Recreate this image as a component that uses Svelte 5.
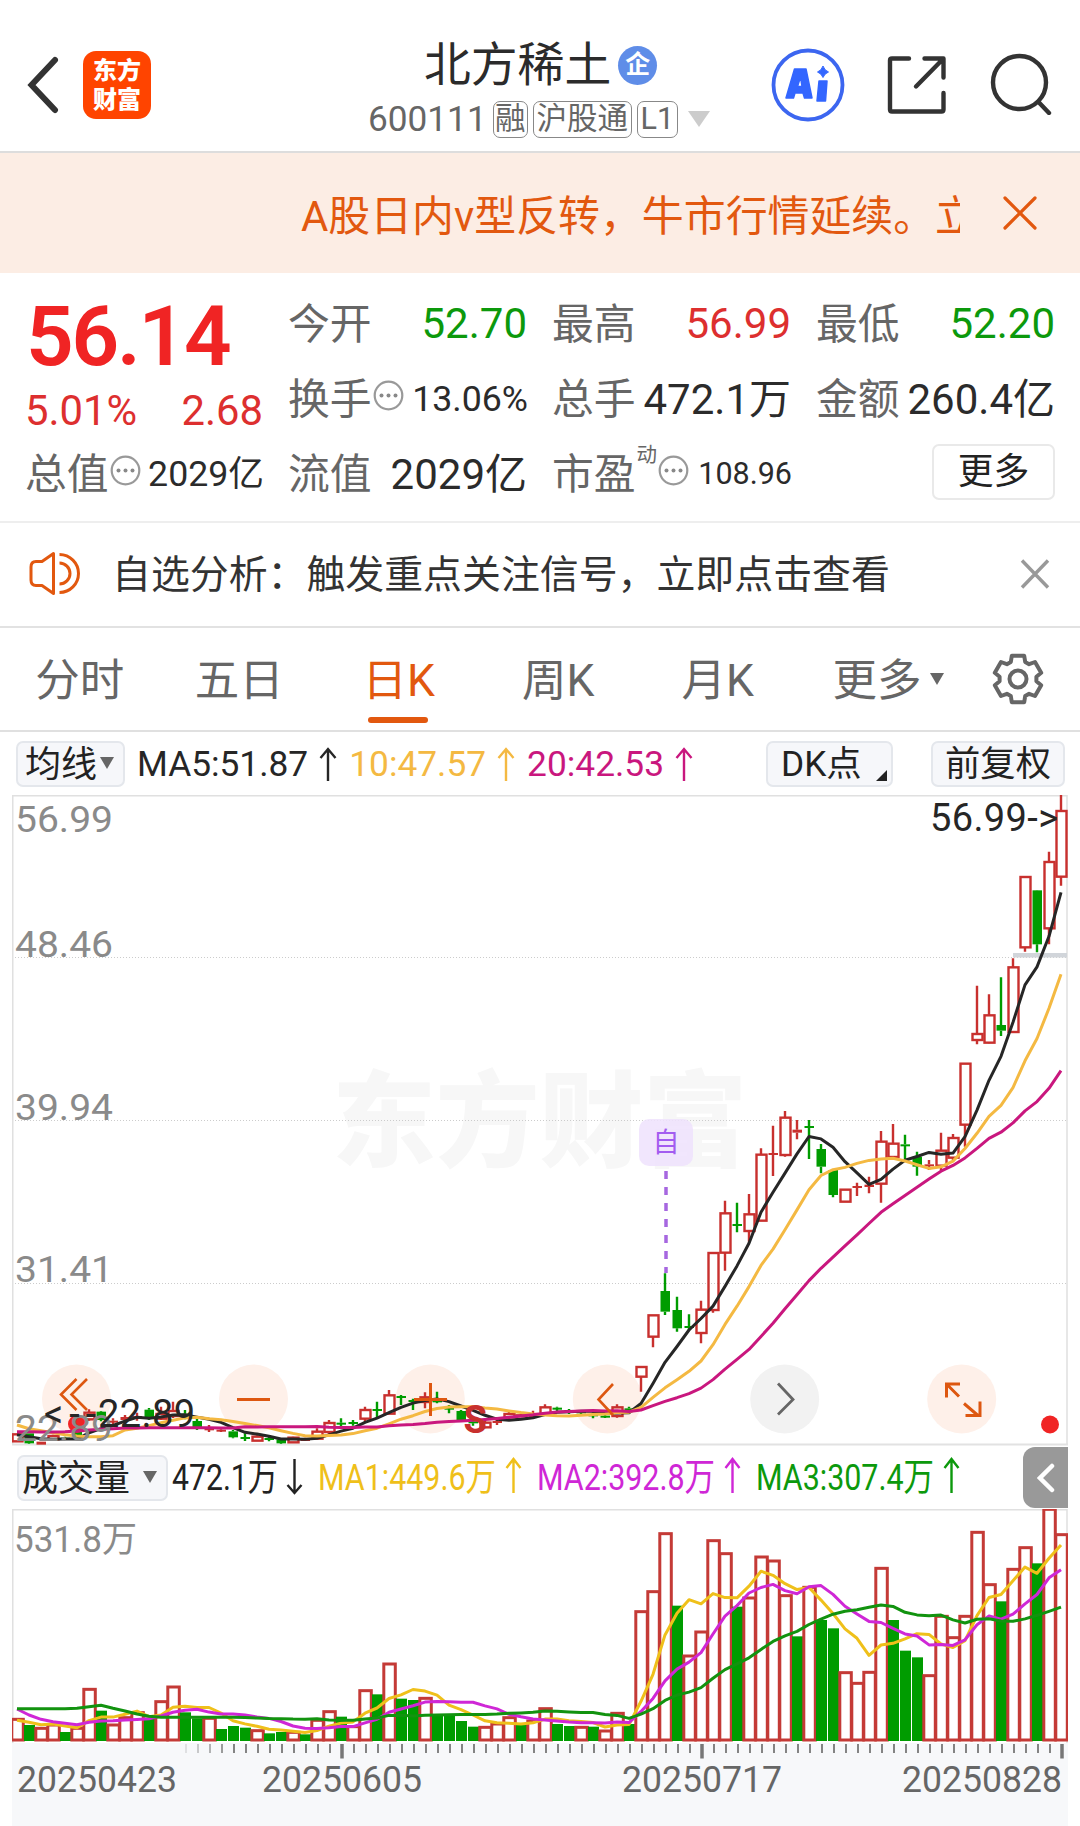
<script lang="ts">
  type Candle = { x: number; high: number; top: number; bottom: number; low: number; up: boolean };

  const STEP = 12;
  const LEFT = 5;

  // rows: high, body top, body bottom, low, direction (1 up / 0 down), in thirds of a pixel
  const early = [
    [283, 283, 304, 304, 1], [280, 280, 310, 312, 0], [305, 305, 314, 314, 1], [284, 288, 298, 300, 1],
    [290, 293, 298, 300, 0], [250, 255, 285, 293, 0], [208, 218, 238, 242, 1], [213, 215, 240, 244, 0],
    [235, 242, 246, 256, 1], [225, 231, 240, 244, 1], [218, 228, 236, 242, 1], [204, 209, 232, 240, 0],
    [200, 222, 236, 240, 1], [185, 213, 228, 234, 1], [210, 221, 225, 238, 0], [235, 243, 264, 270, 0],
    [255, 265, 269, 276, 1], [265, 269, 273, 276, 1], [270, 274, 292, 295, 0], [280, 291, 295, 303, 0],
    [286, 290, 302, 303, 1], [290, 294, 298, 304, 0], [295, 298, 310, 312, 0], [290, 293, 307, 309, 1],
    [293, 297, 300, 303, 1], [265, 275, 296, 297, 1], [240, 249, 276, 283, 1], [235, 248, 252, 262, 0],
    [240, 246, 250, 257, 0], [200, 210, 236, 245, 1], [185, 207, 211, 233, 0], [150, 166, 221, 223, 1],
    [165, 168, 174, 195, 0], [176, 180, 186, 210, 0], [157, 172, 186, 205, 1], [155, 181, 185, 190, 0],
    [195, 203, 207, 220, 0], [210, 213, 240, 242, 0], [235, 244, 250, 257, 0], [240, 248, 262, 265, 1],
    [232, 243, 247, 255, 1], [215, 222, 232, 240, 1], [222, 226, 236, 238, 1], [212, 226, 233, 236, 1],
    [193, 202, 222, 228, 1], [200, 203, 207, 215, 0], [207, 210, 215, 222, 0], [212, 214, 219, 222, 0],
    [215, 223, 227, 235, 0], [218, 227, 231, 234, 0], [193, 202, 228, 233, 1], [200, 205, 211, 218, 0],
    [80, 81, 110, 155, 1]
  ];
  const middle = [
    [765, 766, 830, 862, 1], [640, 693, 755, 765, 0], [710, 750, 805, 815, 0], [763, 798, 803, 812, 0],
    [722, 749, 819, 850, 1], [578, 579, 750, 758, 1], [422, 460, 578, 632, 1], [428, 492, 497, 517, 0],
    [402, 463, 513, 545, 1], [265, 284, 482, 483, 1], [197, 279, 283, 348, 1], [153, 173, 285, 290, 1],
    [180, 209, 218, 238, 1], [180, 198, 202, 297, 0], [252, 267, 320, 340, 0], [328, 330, 405, 412, 0],
    [388, 389, 425, 425, 1], [368, 378, 382, 408, 1]
  ];
  const late = [
    [1190, 1214, 1221, 1240, 1], [1053, 1085, 1211, 1268, 1], [1032, 1091, 1131, 1140, 1],
    [1064, 1093, 1097, 1140, 0], [1115, 1130, 1160, 1187, 0], [1140, 1153, 1158, 1170, 1],
    [1058, 1112, 1157, 1172, 1], [1062, 1074, 1133, 1140, 1], [850, 851, 1034, 1100, 1],
    [617, 762, 780, 793, 1], [643, 706, 788, 790, 1], [592, 735, 752, 768, 0], [535, 562, 756, 758, 1],
    [290, 291, 502, 515, 1], [330, 331, 493, 517, 0], [215, 246, 445, 493, 1], [45, 93, 290, 317, 1]
  ];

  function place(rows: number[][], first: number, base: number): Candle[] {
    return rows.map(([high, top, bottom, low, up], i) => ({
      x: LEFT + (first + i) * STEP,
      high: base + high / 3,
      top: base + top / 3,
      bottom: base + bottom / 3,
      low: base + low / 3,
      up: up === 1
    }));
  }

  const candles = [...place(early, 0, 545), ...place(middle, 53, 265), ...place(late, 71, -15)];

  // bar tops in thirds of a pixel; negative means a falling day
  const tops = [
    1138, -1155, 1165, 1155, -1176, 1165, 1048, -1112, 1155, 1133, 1118, -1133, 1085, 1041, -1117, -1135,
    1135, -1167, -1158, -1163, 1172, -1180, -1176, 1177, -1183, 1141, 1115, -1130, 1160, 1052, -1063, 972,
    -1076, -1080, 1075, -1123, -1124, -1143, -1160, 1162, 1152, 1133, -1152, 1143, 1106, -1152, -1158, 1162,
    -1160, 1173, 1120, -1152, 815, 755, 581, -797, 948, 876, 602, 641, -800, 774, 651, 663, 767, -889, 742,
    -840, -865, 998, 1030, 997, 685, -840, -932, -952, 1007, 829, 893, 829, 577, 734, -784, 688, 623, -670,
    508, 584
  ];
  const bars = tops.map((t, i) => ({ x: LEFT + i * STEP, y: Math.abs(t) / 3 - 169, up: t > 0 }));

  function average(values: number[], n: number, lead: number[]) {
    return values
      .map((_, i) => {
        const y = i < n - 1 ? lead[i] : values.slice(i - n + 1, i + 1).reduce((a, b) => a + b, 0) / n;
        return `${LEFT + i * STEP},${y.toFixed(1)}`;
      })
      .join(" ");
  }

  const closes = candles.map((c) => (c.up ? c.top : c.bottom));
  const third = (base: number, list: number[]) => list.map((v) => base + v / 3);
  const priceLines = [
    { color: "#262626", points: average(closes, 5, third(545, [284, 290, 296, 298])) },
    { color: "#f4b942", points: average(closes, 10, third(545, [255, 266, 272, 278, 284, 288, 290, 290, 287])) },
    {
      color: "#c9177e",
      points: average(closes, 20, third(545, [275, 275, 276, 276, 275, 273, 270, 268, 266, 264, 264, 263, 263, 263, 263, 263, 263, 264, 264]))
    }
  ];
  const volumes = bars.map((b) => b.y);
  const volumeLines = [
    { color: "#efc01a", points: average(volumes, 5, third(-169, [1141, 1147, 1154, 1152])) },
    { color: "#cf27d6", points: average(volumes, 10, third(-169, [1107, 1125, 1138, 1145, 1150, 1154, 1147, 1143, 1142])) },
    {
      color: "#12930f",
      points: average(volumes, 20, third(-169, [1106, 1106, 1106, 1106, 1106, 1105, 1100, 1096, 1105, 1113, 1122, 1129, 1132, 1132, 1132, 1132, 1132, 1132, 1132]))
    }
  ];

  const gridLines = [162.5, 325.5, 488.5];
  const priceLabels = [
    { text: "56.99", y: 37 }, { text: "48.46", y: 162 }, { text: "39.94", y: 325 },
    { text: "31.41", y: 487 }, { text: "22.89", y: 646 }
  ];
  const volumeLegend = [
    { text: "472.1万", x: 160, width: 106, color: "#222", arrow: 282.5, down: true },
    { text: "MA1:449.6万", x: 306, width: 178, color: "#efc01a", arrow: 501.5 },
    { text: "MA2:392.8万", x: 525, width: 178, color: "#cf27d6", arrow: 720.5 },
    { text: "MA3:307.4万", x: 744, width: 178, color: "#0c990c", arrow: 939.5 }
  ];
  const averages = [
    { text: "MA5:51.87", color: "#262626" },
    { text: "10:47.57", color: "#f4b942" },
    { text: "20:42.53", color: "#c9177e" }
  ];
  const ticks = Array.from({ length: 74 }, (_, i) => ({
    x: 174 + i * STEP,
    major: [13, 43, 73].includes(i),
    opacity: Math.min(1, 0.2 + i * 0.2)
  }));
  const dates = [
    { text: "20250423", x: 5 }, { text: "20250605", x: 250 },
    { text: "20250717", x: 610 }, { text: "20250828", x: 890 }
  ];
  const tabs = ["分时", "五日", "日K", "周K", "月K"];

  const gear = [0, 1, 2, 3, 4, 5]
    .flatMap((k) => [[-23, 18.5], [-15, 24], [15, 24], [23, 18.5]].map(([d, r]) => {
      const a = ((k * 60 - 90 + d) * Math.PI) / 180;
      return `${(27 + r * Math.cos(a)).toFixed(1)},${(27 + r * Math.sin(a)).toFixed(1)}`;
    }))
    .join(" ");
</script>

{#snippet more()}
  <svg class="dots" width="31" height="31" viewBox="0 0 31 31">
    <circle cx="15.5" cy="15.5" r="13.8" fill="none" stroke="#999" stroke-width="2.200" />
    <g fill="#888"><circle cx="8.5" cy="15.5" r="2" /><circle cx="15.5" cy="15.5" r="2" /><circle cx="22.5" cy="15.5" r="2" /></g>
  </svg>
{/snippet}

<div class="app">
  <header>
    <svg class="back" width="32" height="60" viewBox="0 0 32 60"><path d="M28 5 4.5 30 28 55" fill="none" stroke="#333" stroke-width="6" stroke-linecap="round" /></svg>
    <div class="logo"><span>东方</span><span>财富</span></div>
    <div class="stock">
      <div class="name">北方稀土<span class="badge">企</span></div>
      <div class="code">
        <span class="num">600111</span><span class="tag">融</span><span class="tag wide">沪股通</span><span class="tag">L1</span>
        <svg width="22" height="16" viewBox="0 0 22 16"><path d="M0 0H22L11 16Z" fill="#ccc" /></svg>
      </div>
    </div>
    <svg class="ai" width="74" height="74" viewBox="0 0 74 74">
      <circle cx="37" cy="37" r="34.5" fill="none" stroke="#3c66f0" stroke-width="3.8" />
      <path d="M15 50 23.5 21H35L41 50H33.500L32 45H24L22.500 50ZM26.5 38.500H31L29.500 29Z" fill="#3366ff" stroke="#3366ff" stroke-width="1.500" stroke-linejoin="round" fill-rule="evenodd" />
      <path d="M48 33H56L54.500 53H46Z" fill="#3366ff" stroke="#3366ff" stroke-width="1.500" stroke-linejoin="round" />
      <path d="M52 18Q53.500 22.500 57.500 24Q53.500 25.500 52 29.500Q50.500 25.500 46.500 24Q50.500 22.500 52 18Z" fill="#3366ff" stroke="#3366ff" />
    </svg>
    <svg class="share" width="60" height="60" viewBox="0 0 60 60" fill="none" stroke="#333" stroke-width="4.400" stroke-linecap="round" stroke-linejoin="round">
      <path d="M22 3.500H5Q3 3.500 3 5.500V54.500Q3 56.500 5 56.500H54.500Q56.500 56.500 56.500 54.500V38M37.500 3.500H56.500V22.500M56 4 29 31.500" />
    </svg>
    <svg class="search" width="62" height="62" viewBox="0 0 62 62" fill="none" stroke="#333" stroke-width="4.400" stroke-linecap="round"><circle cx="29.500" cy="29.500" r="26.500" /><path d="M48.500 49 59 60" /></svg>
  </header>

  <div class="banner">
    <p>A股日内v型反转，牛市行情延续。立</p>
    <svg width="34" height="34" viewBox="0 0 34 34"><path d="M2 2 32 32M32 2 2 32" stroke="#e2580f" stroke-width="3.200" stroke-linecap="round" /></svg>
  </div>

  <section class="quote">
    <div class="price">
      <strong>56.14</strong>
      <div class="cell red"><span>5.01%</span><span>2.68</span></div>
    </div>
    <div class="cell"><label>今开</label><b class="green">52.70</b></div>
    <div class="cell"><label>最高</label><b class="red">56.99</b></div>
    <div class="cell"><label>最低</label><b class="green">52.20</b></div>
    <div class="cell"><label>换手{@render more()}</label><b class="mid">13.06%</b></div>
    <div class="cell"><label>总手</label><b class="cjk">472.1万</b></div>
    <div class="cell"><label>金额</label><b class="cjk">260.4亿</b></div>
    <div class="cell"><label>总值{@render more()}</label><b class="mid cjk">2029亿</b></div>
    <div class="cell"><label>流值</label><b class="cjk">2029亿</b></div>
    <div class="cell"><label>市盈<sup>动</sup>{@render more()}</label><b class="small">108.96</b></div>
    <div class="cell"><button class="expand">更多</button></div>
  </section>

  <div class="notice">
    <svg width="52" height="46" viewBox="0 0 52 46" fill="none" stroke="#e2580f" stroke-width="3">
      <path d="M24.500 2.500V42.500L13 34.500H7Q2 34.500 2 29V16Q2 10.500 7 10.500H13Z" stroke-linejoin="round" />
      <path d="M30.500 12A10.500 10.500 0 0 1 30.500 33M30.500 3.500A19 19 0 0 1 30.500 41.500" />
    </svg>
    <p>自选分析：触发重点关注信号，立即点击查看</p>
    <svg width="30" height="30" viewBox="0 0 30 30"><path d="M2 1.500 28 28.500M28 1.500 2 28.500" stroke="#999" stroke-width="3.400" /></svg>
  </div>

  <nav>
    {#each tabs as tab}
      <span class:active={tab === "日K"}>{tab}</span>
    {/each}
    <span class="menu">更多<svg width="14" height="12" viewBox="0 0 14 12"><path d="M0 0H14L7 12Z" fill="#666" /></svg></span>
    <svg class="gear" width="54" height="54" viewBox="0 0 54 54" fill="none" stroke="#666" stroke-width="4" stroke-linejoin="round"><polygon points={gear} /><circle cx="27" cy="27" r="8.500" /></svg>
  </nav>

  <div class="averages">
    <button class="line">均线<svg width="14" height="12" viewBox="0 0 14 12"><path d="M0 0H14L7 12Z" fill="#666" /></svg></button>
    {#each averages as item}
      <span class="avg" style:color={item.color}>{item.text}<svg width="18" height="34" viewBox="0 0 18 34" fill="none" stroke="currentColor" stroke-width="2.400"><path d="M9 34V2M1.500 11 9 2 16.500 11" /></svg></span>
    {/each}
    <button class="dk">DK点<svg width="11" height="11" viewBox="0 0 11 11"><path d="M11 0V11H0Z" fill="#222" /></svg></button>
    <button class="adjust">前复权</button>
  </div>

  <svg class="chart" width="1056" height="651" viewBox="0 0 1056 651">
    <text class="watermark" x="320" y="364" textLength="415" lengthAdjust="spacingAndGlyphs">东方财富</text>
    {#each gridLines as y}
      <path d="M0 {y}H1055" stroke="#ccc" stroke-dasharray="1 2" />
    {/each}
    <path d="M.75 650V.75H1055V650" fill="none" stroke="#e0e0e0" stroke-width="1.500" />
    <path d="M0 649.500H1056" stroke="#e2e2e2" stroke-width="2" />
    <rect x="1001" y="158" width="54" height="4.500" fill="#d1d5da" />
    {#each [64.5, 241.5, 418.3, 595.3, 772.7, 949.7] as cx, i}
      <circle {cx} cy="604" r="34.500" fill={i === 4 ? "#f2f2f2" : "#fef0e9"} />
    {/each}
    {#each candles as c}
      {@const color = c.up ? "#c8302e" : "#009c00"}
      <path d="M{c.x} {c.high}V{c.top}M{c.x} {c.bottom}V{c.low}" stroke={color} stroke-width="2.400" />
      {#if c.up && c.bottom - c.top > 3}
        <rect x={c.x - 4.5} y={c.top} width="10" height={c.bottom - c.top} fill="none" stroke={color} stroke-width="2.400" />
      {:else}
        <rect x={c.x - 4.5} y={c.top} width="9.500" height={Math.max(2, c.bottom - c.top)} fill={color} />
      {/if}
    {/each}
    <circle cx="65" cy="629" r="9" fill="#f02424" />
    <circle cx="1038" cy="629.500" r="9" fill="#f02424" />
    {#each priceLines as line}
      <polyline points={line.points} fill="none" stroke={line.color} stroke-width="3" stroke-linejoin="round" />
    {/each}
    {#each priceLabels as label}
      <text class="label" x="3" y={label.y} textLength="98" lengthAdjust="spacingAndGlyphs">{label.text}</text>
    {/each}
    <text class="s" x="451.500" y="638">S</text>
    <g fill="none" stroke="#dd5710" stroke-width="2.600">
      <path d="M64.500 584 49 599.500 64.500 615M75 584 59.500 599.500 75 615" />
      <path d="M225 604.500H258M402 604.500H435M418.500 588V621" stroke-width="3" />
      <path d="M601 589 586.500 604.500 601 620" />
      <path d="M934.500 602V588.500H948M935 589 947 601M952 608 966 620M953.500 620H968V606" stroke-width="3" transform="translate(0 .5)" />
    </g>
    <path d="M766 588.500 781 604.500 766 619.500" fill="none" stroke="#666" stroke-width="2.800" />
    <path d="M654 376V478" stroke="#a667e0" stroke-width="3.500" stroke-dasharray="8 8" />
    <rect x="627" y="324" width="54" height="47" rx="10" fill="#efe2fd" fill-opacity=".85" />
    <text class="self" x="640.500" y="357">自</text>
    <text class="peak" x="918" y="36" textLength="128">56.99-&gt;</text>
    <text class="peak" x="32" y="632" textLength="52">&lt;--</text>
    <text class="peak" x="86" y="632" textLength="97">22.89</text>
  </svg>

  <div class="volume-head">
    <button class="line">成交量<svg width="14" height="12" viewBox="0 0 14 12"><path d="M0 0H14L7 12Z" fill="#666" /></svg></button>
    <svg class="legend" width="1056" height="62" viewBox="0 0 1056 62">
      {#each volumeLegend as item}
        <text x={item.x} y="44" fill={item.color} textLength={item.width} lengthAdjust="spacingAndGlyphs">{item.text}</text>
        <path d={item.down ? "M0 13V47M-7 39 0 47 7 39" : "M0 47V13M-7 22 0 13 7 22"} transform="translate({item.arrow} 0)" fill="none" stroke={item.color} stroke-width="2.400" />
      {/each}
    </svg>
    <div class="drawer"><svg width="18" height="30" viewBox="0 0 18 30"><path d="M15 3 3 15 15 27" fill="none" stroke="#fff" stroke-width="4.500" stroke-linecap="round" /></svg></div>
  </div>

  <svg class="chart" width="1056" height="234" viewBox="0 0 1056 234">
    <path d="M.75 234V.75H1055V234" fill="none" stroke="#e0e0e0" stroke-width="1.500" />
    <text class="label" x="2" y="42.500" textLength="123" lengthAdjust="spacingAndGlyphs">531.8万</text>
    {#each bars as bar}
      {#if bar.up}
        <rect x={bar.x - 5.2} y={bar.y} width="11.500" height={231 - bar.y} fill="#fff" stroke="#c43a36" stroke-width="3" />
      {:else}
        <rect x={bar.x - 5} y={bar.y} width="11" height={232 - bar.y} fill="#009c00" />
      {/if}
    {/each}
    {#each volumeLines as line}
      <polyline points={line.points} fill="none" stroke={line.color} stroke-width="3" stroke-linejoin="round" />
    {/each}
  </svg>

  <svg class="chart axis" width="1056" height="83" viewBox="0 0 1056 83">
    {#each ticks as tick}
      <path d="M{tick.x} 1V{tick.major ? 15.5 : 10}" stroke="#777" stroke-width={tick.major ? 3.5 : 1.8} opacity={tick.opacity} />
    {/each}
    {#each dates as date}
      <text x={date.x} y="48.500" textLength="160" lengthAdjust="spacingAndGlyphs">{date.text}</text>
    {/each}
  </svg>
</div>

<style>
  :global(body) { background: #fff; }
  .app { width: 1080px; height: 1826px; overflow: hidden; background: #fff; color: #2b2b2b; font-family: Roboto, "Noto Sans CJK SC", sans-serif; }
  .app svg { display: block; flex: none; }
  p { margin: 0; }
  button { box-sizing: border-box; display: flex; align-items: center; margin: 0; padding: 0 0 6px; border: 2px solid #e4e7ec; border-radius: 7px; background: #f6f7fa; color: #222; font: inherit; white-space: nowrap; }

  header { box-sizing: border-box; display: flex; align-items: flex-start; height: 153px; border-bottom: 2px solid #ddd; }
  .back { margin: 55px 0 0 27px; }
  .logo { display: flex; flex-direction: column; justify-content: center; align-items: center; box-sizing: border-box; width: 68px; height: 68px; margin: 51px 0 0 24px; padding-bottom: 4px; border-radius: 13px; background: #ff4400; color: #fff; font: 900 24px/29px "Noto Sans CJK SC", sans-serif; }
  .stock { width: 343px; margin: 35px 0 0 217px; white-space: nowrap; }
  .name { display: flex; align-items: center; height: 60px; padding-left: 56px; font-size: 46.800px; line-height: 60px; }
  .badge { width: 39px; height: 39px; margin-left: 7px; border-radius: 50%; background: #5f8de8; color: #fff; font-size: 25px; font-weight: 700; line-height: 38px; text-align: center; }
  .code { display: flex; align-items: center; height: 48px; color: #666; font-size: 30.5px; }
  .num { width: 124.500px; font-size: 35.2px; }
  .tag { box-sizing: border-box; flex: none; height: 37px; margin-right: 5px; padding: 0 1.500px; border: 1.5px solid #888; border-radius: 7px; line-height: 34px; }
  .tag.wide { padding: 0 2.500px; }
  .tag:nth-child(4) { padding: 0 3px; }
  .code svg { margin-left: 5px; }
  .ai { margin: 48px 0 0 60px; }
  .share { margin: 55px 0 0 42px; }
  .search { margin: 53px 0 0 43px; }

  .banner { display: flex; align-items: center; height: 120px; background: #fcede4; color: #e2580f; }
  .banner p { width: 659px; margin: -1px 0 0 301px; overflow: hidden; font-size: 41.9px; white-space: nowrap; }
  .banner svg { margin: -1px 0 0 43px; }

  .quote { box-sizing: border-box; display: grid; grid-template-columns: 238px 239px 239px 239px; grid-template-rows: repeat(3, 75px); column-gap: 25px; height: 250px; padding: 13px 0 0 25px; border-bottom: 2px solid #eee; }
  .price { grid-row: 1 / 3; }
  .price strong { display: block; height: 87px; margin-left: 1px; color: #f02424; font-size: 83.500px; font-weight: 600; line-height: 102px; letter-spacing: -2.200px; }
  .cell { position: relative; display: flex; justify-content: space-between; align-items: center; height: 75px; font-size: 42px; white-space: nowrap; }
  .price .cell { height: 75px; font-size: 41.8px; }
  label { display: flex; align-items: center; margin-top: -6px; color: #666; font-size: 41.8px; }
  .cell b { font-weight: 400; }
  .cell .cjk { margin-top: -6px; }
  .cell .mid { margin-right: -1px; font-size: 35.700px; }
  .cell .small { margin-right: -1px; font-size: 30.500px; }
  .dots { margin: 0 0 0 1px; }
  sup { margin: -32px 0 0 1px; font-size: 20.500px; line-height: 24px; }
  .red { color: #dd2f2f; }
  .green { color: #0c990c; }
  .expand { justify-content: center; width: 125px; height: 56px; margin: -4px 0 0 116px; padding-bottom: 7px; border-color: #e9e9e9; background: #fff; font-size: 35.8px; }

  .notice { box-sizing: border-box; display: flex; align-items: center; height: 105px; padding: 0 30px 0 29px; border-bottom: 2px solid #e2e2e2; color: #333; }
  .notice p { flex: 1; margin: -8px 0 0 31px; font-size: 38.900px; }
  .notice svg { position: relative; top: -1px; }

  nav { box-sizing: border-box; display: flex; align-items: center; height: 104px; border-bottom: 2px solid #e0e0e0; color: #666; font-size: 44.500px; }
  nav span { position: relative; top: 2px; width: 159.500px; text-align: center; line-height: 100px; }
  nav .active { color: #e2580f; }
  nav .active::after { position: absolute; bottom: 8px; left: 49px; width: 60px; height: 6px; border-radius: 3px; background: #e2580f; content: ""; }
  nav .menu { display: flex; align-items: center; width: 112px; margin-left: 35px; }
  .menu svg { margin: -4px 0 0 8px; }
  nav .gear { margin-left: 46px; }

  .averages { display: flex; align-items: center; height: 63px; padding-left: 16px; font-size: 35.300px; }
  .averages button { height: 46px; }
  .averages .line { width: 109px; margin-right: 12px; padding-left: 7px; font-size: 36px; }
  .line svg { position: relative; top: 2px; }
  .averages .line svg { margin-left: 3px; }
  .avg { display: flex; align-items: center; margin-right: 12px; white-space: nowrap; }
  .avg svg { margin-left: 11px; }
  .averages .dk { position: relative; width: 127px; margin-left: auto; padding-left: 13px; }
  .dk svg { position: absolute; right: 4px; bottom: 4px; }
  .averages .adjust { justify-content: center; width: 134px; margin: 0 15px 0 38px; }

  .chart { margin-left: 12px; }
  .watermark { fill: #f7f7f7; font: 900 104px "Noto Sans CJK SC", sans-serif; }
  .label { fill: #8a8a8a; font-size: 36.500px; }
  .s { fill: #c8302e; font-size: 38px; font-weight: 700; }
  .self { fill: #a35cf0; font-size: 27px; }
  .peak { fill: #262626; font-size: 38px; }

  .volume-head { position: relative; display: flex; align-items: center; height: 63px; padding-left: 17px; }
  .volume-head .line { width: 151px; height: 46px; padding-left: 3px; font-size: 36px; }
  .volume-head .line svg { margin-left: 13px; }
  .legend { position: absolute; top: 0; left: 12px; font-size: 37.500px; }
  .drawer { position: relative; display: flex; align-items: center; justify-content: center; width: 45px; height: 61px; margin-left: auto; margin-right: 12px; border-radius: 12px 0 0 12px; background: #999; }

  .axis { background: #f7f8fa; }
  .axis text { fill: #666; font-size: 36px; }
</style>
